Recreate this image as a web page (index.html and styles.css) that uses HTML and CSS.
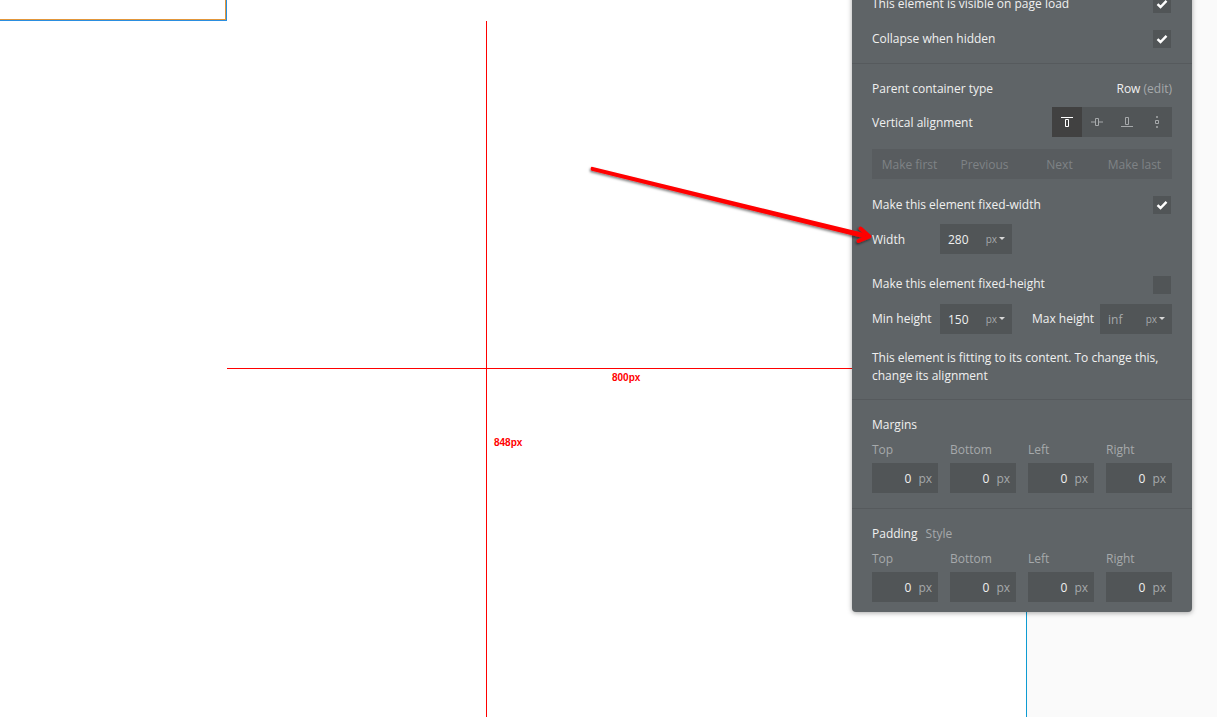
FILE: index.html
```html
<!DOCTYPE html>
<html lang="en">

<head>
    <meta charset="UTF-8">
    <meta name="viewport" content="width=device-width, initial-scale=1.0">
    <title>Element property editor</title>

    <link rel="stylesheet" href="styles.css">
</head>

<body>
    <div class="canvas">
        <div class="page-area"></div>
        <div class="group-box"></div>

        <!-- red measuring lines -->
        <div class="measure-v"></div>
        <div class="measure-h"></div>
        <div class="measure-label label-width">800px</div>
        <div class="measure-label label-height">848px</div>

        <div class="panel">
            <div class="section section-top">
                <div class="row between">
                    <span>This element is visible on page load</span>
                    <span class="check"><svg width="12" height="10" viewBox="0 0 12 10"><path d="M1.5 5.2 4.500 8 10.500 1.800" /></svg></span>
                </div>
                <div class="row between gap-17">
                    <span>Collapse when hidden</span>
                    <span class="check"><svg width="12" height="10" viewBox="0 0 12 10"><path d="M1.5 5.2 4.500 8 10.500 1.800" /></svg></span>
                </div>
            </div>

            <div class="section">
                <div class="row between">
                    <span>Parent container type</span>
                    <span>Row <span class="muted">(edit)</span></span>
                </div>
                <div class="row-tall between gap-9">
                    <span>Vertical alignment</span>
                    <div class="segments">
                        <div class="segment active">
                            <svg width="14" height="14" viewBox="0 0 14 14"><path d="M1 2.500H13M5.500 4.500H8.500V11.500H5.500Z" /></svg>
                        </div>
                        <div class="segment">
                            <svg width="14" height="14" viewBox="0 0 14 14"><path d="M1 7H5.500M8.500 7H13M5.500 3.500H8.500V10.500H5.500Z" /></svg>
                        </div>
                        <div class="segment">
                            <svg width="14" height="14" viewBox="0 0 14 14"><path d="M1 11.500H13M5.500 2.500H8.500V9.500H5.500Z" /></svg>
                        </div>
                        <div class="segment">
                            <svg width="14" height="14" viewBox="0 0 14 14"><path d="M5.500 5.500H8.500V8.500H5.500Z" /><path class="dots" d="M7 1V3M7 11V13" /></svg>
                        </div>
                    </div>
                </div>

                <div class="order-buttons">
                    <span>Make first</span>
                    <span>Previous</span>
                    <span>Next</span>
                    <span>Make last</span>
                </div>

                <div class="row between gap-17">
                    <span>Make this element fixed-width</span>
                    <span class="check"><svg width="12" height="10" viewBox="0 0 12 10"><path d="M1.5 5.2 4.500 8 10.500 1.800" /></svg></span>
                </div>
                <div class="row-tall gap-10">
                    <span class="field-name">Width</span>
                    <div class="unit-input">
                        <span class="value">280</span>
                        <span class="unit">px<i class="caret"></i></span>
                    </div>
                </div>

                <div class="row between gap-22">
                    <span class="lifted">Make this element fixed-height</span>
                    <span class="check"></span>
                </div>
                <div class="row-tall between gap-10">
                    <div class="pair">
                        <span class="field-name lifted">Min height</span>
                        <div class="unit-input">
                            <span class="value">150</span>
                            <span class="unit">px<i class="caret"></i></span>
                        </div>
                    </div>
                    <div class="pair">
                        <span class="field-name lifted">Max height</span>
                        <div class="unit-input">
                            <span class="value muted">inf</span>
                            <span class="unit">px<i class="caret"></i></span>
                        </div>
                    </div>
                </div>

                <p class="note">This element is fitting to its content. To change this, change its alignment</p>
            </div>

            <div class="section">
                <div class="row">Margins</div>
                <div class="box-labels">
                    <span>Top</span><span>Bottom</span><span>Left</span><span>Right</span>
                </div>
                <div class="box-inputs">
                    <div class="px-input"><span>0</span><span class="muted">px</span></div>
                    <div class="px-input"><span>0</span><span class="muted">px</span></div>
                    <div class="px-input"><span>0</span><span class="muted">px</span></div>
                    <div class="px-input"><span>0</span><span class="muted">px</span></div>
                </div>
            </div>

            <div class="section section-last">
                <div class="row">Padding <span class="muted style-link">Style</span></div>
                <div class="box-labels">
                    <span>Top</span><span>Bottom</span><span>Left</span><span>Right</span>
                </div>
                <div class="box-inputs">
                    <div class="px-input"><span>0</span><span class="muted">px</span></div>
                    <div class="px-input"><span>0</span><span class="muted">px</span></div>
                    <div class="px-input"><span>0</span><span class="muted">px</span></div>
                    <div class="px-input"><span>0</span><span class="muted">px</span></div>
                </div>
            </div>
        </div>

        <!-- annotation arrow on top of the panel -->
        <svg class="arrow" width="300" height="90" viewBox="0 0 300 90">
            <defs>
                <filter id="arrowShadow" x="-5%" y="-20%" width="110%" height="140%">
                    <feDropShadow dx="-1" dy="1.5" stdDeviation="1" flood-color="#000" flood-opacity="0.5" />
                </filter>
            </defs>
            <g filter="url(#arrowShadow)">
                <path class="arrow-shaft" d="M11.800 5.800C10.300 6.200 10.300 9.200 11.800 9.700L285 77.500L286 72.500Z" />
                <path class="arrow-head" d="M280.500 67.500 289.500 75.500 278.500 80" />
            </g>
        </svg>
    </div>
</body>

</html>
```

FILE: styles.css
```css
html, body {
    margin: 0;
    height: 100%;
    overflow: hidden;
    background-color: #ffffff;
}

.canvas {
    position: relative;
    width: 1217px;
    height: 717px;
    overflow: hidden;
}

.page-area {
    position: absolute;
    left: 1026px;
    top: 0;
    right: 0;
    bottom: 0;
    border-left: 1px solid #0e9bd2;
    background-color: #fafafa;
}

.group-box {
    position: absolute;
    left: -10px;
    top: -10px;
    width: 234px;
    height: 28px;
    border: 1px solid #e2963a;
    box-shadow: 0 0 0 1px #2a8ee0;
}

.measure-v {
    position: absolute;
    left: 486px;
    top: 21px;
    width: 1px;
    height: 696px;
    background-color: #ff0000;
}

.measure-h {
    position: absolute;
    left: 227px;
    top: 368px;
    width: 640px;
    height: 1px;
    background-color: #ff0000;
}

.measure-label {
    position: absolute;
    font-family: "Liberation Sans", Arial, sans-serif;
    font-size: 10px;
    font-weight: bold;
    line-height: 12px;
    color: #ff0000;
}

.label-width {
    left: 612px;
    top: 372px;
}

.label-height {
    left: 494px;
    top: 437px;
}

.panel {
    position: absolute;
    left: 852px;
    top: -13px;
    width: 340px;
    background-color: #5f6467;
    border-radius: 0 0 4px 4px;
    box-shadow: 0 1px 5px rgba(0, 0, 0, 0.35);
    font-family: "Open Sans", sans-serif;
    font-size: 12px;
    color: #f0f0f0;
}

.section {
    padding: 16px 20px 15px;
    border-bottom: 1px solid #565a5d;
}

.section-top {
    padding-top: 8px;
}

.section-last {
    padding-bottom: 10px;
    border-bottom: none;
}

.row {
    height: 18px;
    line-height: 18px;
}

.row-tall {
    display: flex;
    align-items: center;
    height: 30px;
}

.between {
    display: flex;
    align-items: center;
    justify-content: space-between;
}

.gap-9 {
    margin-top: 9px;
}

.gap-10 {
    margin-top: 10px;
}

.gap-17 {
    margin-top: 17px;
}

.gap-22 {
    margin-top: 22px;
}

.lifted {
    margin-bottom: 2px;
}

.muted {
    color: #a6a9ab;
}

.check {
    display: flex;
    align-items: center;
    justify-content: center;
    width: 18px;
    height: 18px;
    margin-right: 1px;
    background-color: #515557;
}

.check path {
    fill: none;
    stroke: #ffffff;
    stroke-width: 2.4;
}

.segments {
    display: flex;
    background-color: #515557;
}

.segment {
    display: flex;
    align-items: center;
    justify-content: center;
    width: 30px;
    height: 30px;
}

.segment path {
    fill: none;
    stroke: #a6a9ab;
    stroke-width: 1;
}

.segment .dots {
    stroke-width: 1.5;
}

.segment.active {
    background-color: #414141;
}

.segment.active path {
    stroke: #ffffff;
}

.order-buttons {
    display: grid;
    grid-template-columns: repeat(4, 75px);
    height: 30px;
    margin-top: 12px;
    line-height: 32px;
    text-align: center;
    background-color: #585c5f;
    color: #7f8386;
}

.field-name {
    width: 68px;
}

.pair {
    display: flex;
    align-items: center;
}

.unit-input {
    display: flex;
    align-items: center;
    justify-content: space-between;
    box-sizing: border-box;
    width: 72px;
    height: 30px;
    padding: 1px 7px 0 8px;
    background-color: #515557;
}

.unit {
    display: flex;
    align-items: center;
    margin-top: -2px;
    font-size: 10px;
    color: #a6a9ab;
}

.caret {
    width: 0;
    height: 0;
    margin-left: 2px;
    border-left: 3px solid transparent;
    border-right: 3px solid transparent;
    border-top: 3px solid #d8d8d8;
}

.note {
    margin: 15px 0 -1px 0;
    line-height: 18px;
}

.box-labels {
    display: grid;
    grid-template-columns: repeat(4, 66px);
    gap: 12px;
    height: 18px;
    margin-top: 7px;
    line-height: 18px;
    color: #a6a9ab;
}

.box-inputs {
    display: grid;
    grid-template-columns: repeat(4, 66px);
    gap: 12px;
    margin-top: 4px;
}

.px-input {
    display: flex;
    align-items: center;
    justify-content: flex-end;
    gap: 7px;
    height: 30px;
    padding-right: 6px;
    background-color: #515557;
}

.style-link {
    margin-left: 5px;
}

.arrow {
    position: absolute;
    left: 580px;
    top: 161px;
}

.arrow-shaft {
    fill: #ff0000;
}

.arrow-head {
    fill: none;
    stroke: #ff0000;
    stroke-width: 4;
    stroke-linecap: round;
    stroke-linejoin: round;
}
```
